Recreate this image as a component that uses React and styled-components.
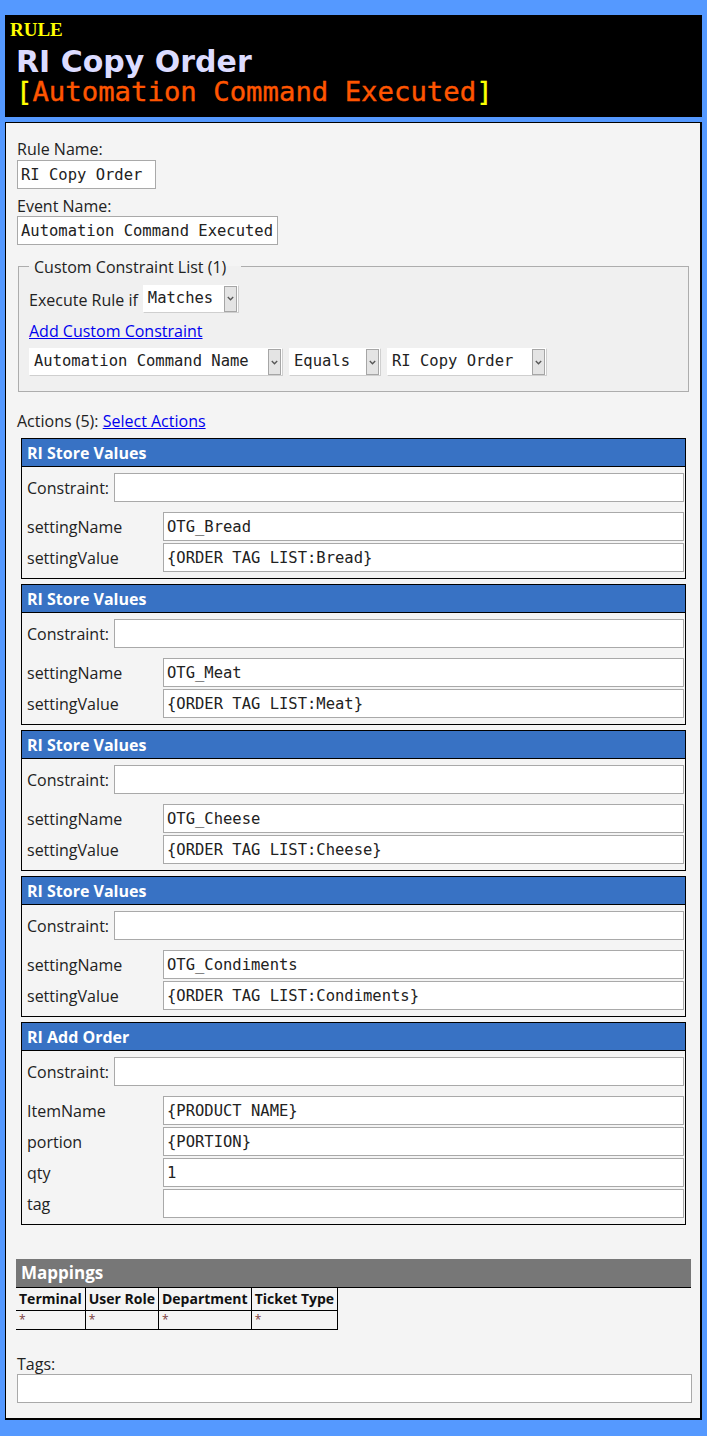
import React from "react";
import styled, { createGlobalStyle } from "styled-components";

const GlobalStyle = createGlobalStyle`
  html, body {
    margin: 0;
    background: #5599ff;
  }
  body {
    font-family: "Open Sans", "Noto Sans", sans-serif;
    font-size: 16px;
    color: #222;
  }
`;

const MONO = `"DejaVu Sans Mono", "Liberation Mono", monospace`;

const Page = styled.div`
  padding: 15px 5px 15px 5px;
`;

const RuleHeader = styled.header`
  background: #000;
  padding: 5px 5px 10px 5px;
`;

const RuleKind = styled.div`
  font-family: "Liberation Serif", serif;
  font-weight: bold;
  font-size: 19px;
  line-height: 20px;
  color: #ffff00;
`;

const RuleTitle = styled.h1`
  margin: 7px 0 0 6px;
  font-family: "DejaVu Sans", sans-serif;
  font-weight: bold;
  font-size: 30px;
  line-height: 30px;
  color: #dcdcff;
`;

const EventTitle = styled.div`
  margin-left: 6px;
  font-family: ${MONO};
  font-size: 27.3px;
  line-height: 30px;
  color: #ff5500;
  white-space: nowrap;
  -webkit-text-stroke: 0.4px currentColor;
`;

const Bracket = styled.span`
  color: #ffff00;
`;

const Panel = styled.main`
  margin-top: 5px;
  background: #f4f4f4;
  border: 1px solid #000;
  border-right-width: 2px;
  border-bottom-width: 2px;
  padding: 16px 8px 15px 11px;
`;

const Field = styled.div`
  margin-bottom: ${(p) => p.$gap ?? 7}px;
`;

const FieldLabel = styled.div`
  line-height: 20px;
`;

const TextBox = styled.input`
  display: block;
  box-sizing: border-box;
  width: ${(p) => (p.$width ? `${p.$width}px` : "100%")};
  height: 29px;
  margin: 0;
  padding: 0 3px;
  border: 1px solid #a9a9a9;
  border-radius: 0;
  background: #fff;
  font-family: ${MONO};
  font-size: 15.5px;
  color: #222;
  outline: none;
`;

const ConstraintSet = styled.fieldset`
  margin: 11px 3px 0 1px;
  padding: 7px 10px 15px 10px;
  border: 1px solid #adadad;
  background: #f0f0f0;
  min-width: 0;
`;

const Legend = styled.legend`
  padding: 3px 15px 0 5px;
  line-height: 17px;
`;

const Row = styled.div`
  display: flex;
  align-items: center;
  gap: 6px;
  margin-top: ${(p) => p.$top ?? 0}px;
`;

const InlineLabel = styled.span`
  line-height: 28px;
  padding-top: 3px;
  margin-right: -1px;
`;

const Link = styled.a`
  display: block;
  width: fit-content;
  line-height: 20px;
  color: #0000ee;
  text-decoration: underline;
  cursor: pointer;
`;

const SelectBox = styled.div`
  display: flex;
  box-sizing: border-box;
  width: ${(p) => p.$width}px;
  height: 28px;
  background: #fff;
  border: 1px solid;
  border-color: #fff #cfcfcf #cfcfcf #fff;
`;

const SelectText = styled.span`
  flex: 1;
  padding-left: 4px;
  font-family: ${MONO};
  font-size: 15.5px;
  line-height: 24px;
  color: #222;
  white-space: nowrap;
  overflow: hidden;
`;

const SelectArrow = styled.span`
  display: flex;
  align-items: center;
  justify-content: center;
  box-sizing: border-box;
  width: 13px;
  margin-right: 1px;
  background: #e4e4e4;
  border: 1px solid #a6a6a6;
`;

const ActionsLine = styled.div`
  margin-top: 19px;
  line-height: 20px;
`;

const CardList = styled.div`
  display: flex;
  flex-direction: column;
  gap: 5px;
  margin: 7px 6px 0 4px;
`;

const ActionCard = styled.section`
  border: 1px solid #000;
`;

const CardHeader = styled.div`
  box-sizing: content-box;
  height: 25px;
  padding: 2px 5px 0;
  background: #3872c4;
  border-bottom: 1px solid #000;
  color: #fff;
  font-weight: bold;
  font-size: 16px;
  line-height: 25px;
`;

const CardBody = styled.div`
  padding: 6px 1px 6px 5px;
`;

const ConstraintRow = styled.div`
  display: flex;
  align-items: center;
  margin-bottom: 10px;
`;

const ConstraintLabel = styled.span`
  flex: none;
  width: 87px;
  line-height: 27px;
  padding-top: 2px;
`;

const ParamGrid = styled.div`
  display: grid;
  grid-template-columns: 136px 1fr;
  row-gap: 2px;
`;

const ParamLabel = styled.span`
  line-height: 27px;
  padding-top: 2px;
`;

const MappingBar = styled.div`
  margin: 34px 1px 0 -1px;
  height: 28px;
  padding-left: 5px;
  background: #777;
  border-bottom: 1px solid #000;
  color: #fff;
  font-weight: bold;
  font-size: 17px;
  line-height: 28px;
`;

const MappingTable = styled.table`
  margin-left: -1px;
  border-collapse: collapse;
`;

const Th = styled.th`
  height: 22px;
  padding: 0 3px;
  border-right: 1px solid #000;
  border-bottom: 1px solid #000;
  font-size: 14px;
  font-weight: bold;
  line-height: 22px;
  text-align: left;
  color: #111;
  white-space: nowrap;
`;

const Td = styled.td`
  box-sizing: border-box;
  height: 19px;
  padding: 3px 3px 0;
  border-right: 1px solid #000;
  border-bottom: 1px solid #000;
  font-size: 12px;
  line-height: 12px;
  vertical-align: top;
  color: #7a3b3b;
`;

const TagsField = styled.div`
  margin-top: 24px;
`;

const Chevron = () => (
  <svg width="7" height="5" viewBox="0 0 7 5">
    <polyline points="0.8,1 3.5,3.8 6.2,1" fill="none" stroke="#555" strokeWidth="1.3" />
  </svg>
);

const Select = ({ width, value }) => (
  <SelectBox $width={width}>
    <SelectText>{value}</SelectText>
    <SelectArrow>
      <Chevron />
    </SelectArrow>
  </SelectBox>
);

const actions = [
  {
    name: "RI Store Values",
    params: [
      ["settingName", "OTG_Bread"],
      ["settingValue", "{ORDER TAG LIST:Bread}"],
    ],
  },
  {
    name: "RI Store Values",
    params: [
      ["settingName", "OTG_Meat"],
      ["settingValue", "{ORDER TAG LIST:Meat}"],
    ],
  },
  {
    name: "RI Store Values",
    params: [
      ["settingName", "OTG_Cheese"],
      ["settingValue", "{ORDER TAG LIST:Cheese}"],
    ],
  },
  {
    name: "RI Store Values",
    params: [
      ["settingName", "OTG_Condiments"],
      ["settingValue", "{ORDER TAG LIST:Condiments}"],
    ],
  },
  {
    name: "RI Add Order",
    params: [
      ["ItemName", "{PRODUCT NAME}"],
      ["portion", "{PORTION}"],
      ["qty", "1"],
      ["tag", ""],
    ],
  },
];

const mappingColumns = ["Terminal", "User Role", "Department", "Ticket Type"];

export default function App() {
  return (
    <Page>
      <GlobalStyle />
      <RuleHeader>
        <RuleKind>RULE</RuleKind>
        <RuleTitle>RI Copy Order</RuleTitle>
        <EventTitle>
          <Bracket>[</Bracket>Automation Command Executed<Bracket>]</Bracket>
        </EventTitle>
      </RuleHeader>

      <Panel>
        <Field>
          <FieldLabel>Rule Name:</FieldLabel>
          <TextBox readOnly $width={139} value="RI Copy Order" style={{ marginTop: 1 }} />
        </Field>
        <Field $gap={0}>
          <FieldLabel>Event Name:</FieldLabel>
          <TextBox readOnly $width={261} value="Automation Command Executed" />
        </Field>

        <ConstraintSet>
          <Legend>Custom Constraint List (1)</Legend>
          <Row>
            <InlineLabel>Execute Rule if</InlineLabel>
            <Select width={96} value="Matches" />
          </Row>
          <Row $top={7}>
            <Link>Add Custom Constraint</Link>
          </Row>
          <Row $top={7}>
            <Select width={254} value="Automation Command Name" />
            <Select width={92} value="Equals" />
            <Select width={160} value="RI Copy Order" />
          </Row>
        </ConstraintSet>

        <ActionsLine>
          Actions (5): <Link as="span" style={{ display: "inline" }}>Select Actions</Link>
        </ActionsLine>

        <CardList>
          {actions.map((action, i) => (
            <ActionCard key={i}>
              <CardHeader>{action.name}</CardHeader>
              <CardBody>
                <ConstraintRow>
                  <ConstraintLabel>Constraint:</ConstraintLabel>
                  <TextBox readOnly value="" />
                </ConstraintRow>
                <ParamGrid>
                  {action.params.map(([label, value]) => (
                    <React.Fragment key={label}>
                      <ParamLabel>{label}</ParamLabel>
                      <TextBox readOnly value={value} />
                    </React.Fragment>
                  ))}
                </ParamGrid>
              </CardBody>
            </ActionCard>
          ))}
        </CardList>

        <MappingBar>Mappings</MappingBar>
        <MappingTable>
          <thead>
            <tr>
              {mappingColumns.map((c) => (
                <Th key={c}>{c}</Th>
              ))}
            </tr>
          </thead>
          <tbody>
            <tr>
              {mappingColumns.map((c) => (
                <Td key={c}>*</Td>
              ))}
            </tr>
          </tbody>
        </MappingTable>

        <TagsField>
          <FieldLabel>Tags:</FieldLabel>
          <TextBox readOnly value="" />
        </TagsField>
      </Panel>
    </Page>
  );
}
